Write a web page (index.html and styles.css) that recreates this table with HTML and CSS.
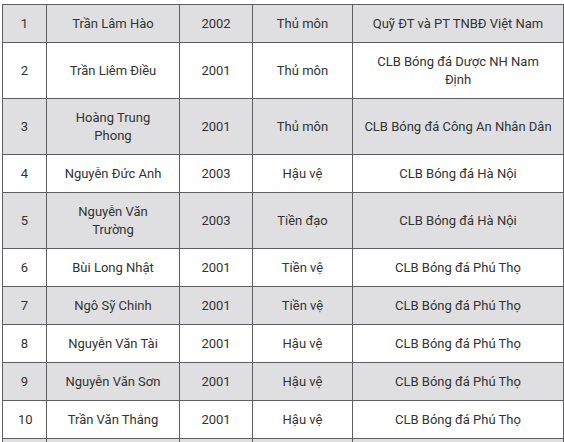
FILE: index.html
```html
<!DOCTYPE html>
<html lang="vi">
<head>
<meta charset="utf-8">
<link rel="stylesheet" href="styles.css">
</head>
<body>
<table class="roster">
  <colgroup>
    <col class="c-no"><col class="c-name"><col class="c-year"><col class="c-pos"><col class="c-club">
  </colgroup>
  <tbody>
    <tr class="alt"><td>1</td><td>Trần Lâm Hào</td><td>2002</td><td>Thủ môn</td><td class="club">Quỹ ĐT và PT TNBĐ Việt Nam</td></tr>
    <tr><td>2</td><td>Trần Liêm Điều</td><td>2001</td><td>Thủ môn</td><td class="club">CLB Bóng đá Dược NH Nam<br>Định</td></tr>
    <tr class="alt"><td>3</td><td>Hoàng Trung Phong</td><td>2001</td><td>Thủ môn</td><td class="club">CLB Bóng đá Công An Nhân Dân</td></tr>
    <tr><td>4</td><td>Nguyễn Đức Anh</td><td>2003</td><td>Hậu vệ</td><td class="club">CLB Bóng đá Hà Nội</td></tr>
    <tr class="alt"><td>5</td><td>Nguyễn Văn Trường</td><td>2003</td><td>Tiền đạo</td><td class="club">CLB Bóng đá Hà Nội</td></tr>
    <tr><td>6</td><td>Bùi Long Nhật</td><td>2001</td><td>Tiền vệ</td><td class="club">CLB Bóng đá Phú Thọ</td></tr>
    <tr class="alt"><td>7</td><td>Ngô Sỹ Chinh</td><td>2001</td><td>Tiền vệ</td><td class="club">CLB Bóng đá Phú Thọ</td></tr>
    <tr><td>8</td><td>Nguyễn Văn Tài</td><td>2001</td><td>Hậu vệ</td><td class="club">CLB Bóng đá Phú Thọ</td></tr>
    <tr class="alt"><td>9</td><td>Nguyễn Văn Sơn</td><td>2001</td><td>Hậu vệ</td><td class="club">CLB Bóng đá Phú Thọ</td></tr>
    <tr><td>10</td><td>Trần Văn Thắng</td><td>2001</td><td>Hậu vệ</td><td class="club">CLB Bóng đá Phú Thọ</td></tr>
    <tr class="alt"><td></td><td></td><td></td><td></td><td class="club"></td></tr>
  </tbody>
</table>
</body>
</html>
```

FILE: styles.css
```css
html, body {
  margin: 0;
  padding: 0;
  background: #ffffff;
}
body {
  padding: 4px 0 0 2px;
  font-family: Roboto, "Liberation Sans", sans-serif;
  font-size: 13px;
  color: #333333;
}
.roster {
  border-collapse: collapse;
  table-layout: fixed;
  width: 561px;
}
.c-no { width: 44px; }
.c-name { width: 133px; }
.c-year { width: 73px; }
.c-pos { width: 100px; }
.c-club { width: 211px; }
.roster td {
  border: 1px solid #5f5f62;
  text-align: center;
  vertical-align: middle;
  padding: 10px 15px 9px;
  line-height: 18px;
  height: 18px;
}
.roster td.club {
  padding-left: 6px;
  padding-right: 6px;
}
.roster tr.alt td {
  background: #dfdfe1;
}
```
